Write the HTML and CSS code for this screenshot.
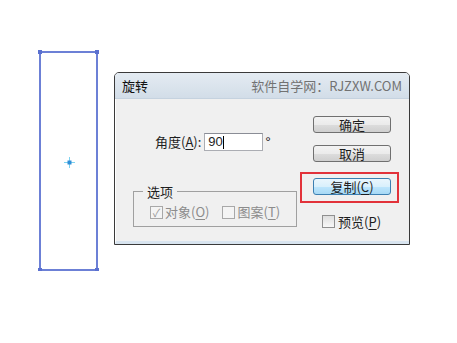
FILE: index.html
```html
<!DOCTYPE html>
<html>
  <head>
    <meta charset="UTF-8">
    <title>旋转</title>
    <link rel="stylesheet" href="styles.css">
  </head>
  <body>
    <div class="page">
      <div class="shape">
        <span class="handle tl"></span>
        <span class="handle tr"></span>
        <span class="handle bl"></span>
        <span class="handle br"></span>
        <svg class="center-point" width="13" height="13" viewBox="0 0 13 13">
          <path d="M6.5 1v11M1 6.5h11" stroke="#7fd3f0" stroke-width="1"/>
          <rect x="4.5" y="4.5" width="4" height="4" fill="#2f8fd8"/>
        </svg>
      </div>

      <div class="dialog">
        <div class="titlebar">
          <span class="title">旋转</span>
          <span class="watermark">软件自学网：RJZXW.COM</span>
        </div>
        <div class="body">
          <div class="left">
            <div class="angle-row">
              <label class="angle-label">角度(<u>A</u>):</label>
              <div class="input">90<span class="caret"></span></div>
              <span class="degree">°</span>
            </div>
            <div class="group">
              <span class="legend">选项</span>
              <div class="group-row">
                <span class="check checked">✓</span>
                <span class="muted">对象(<u>O</u>)</span>
                <span class="check second"></span>
                <span class="muted">图案(<u>T</u>)</span>
              </div>
            </div>
          </div>
          <div class="right">
            <button class="btn">确定</button>
            <button class="btn">取消</button>
            <div class="highlight">
              <button class="btn primary">复制(<u>C</u>)</button>
            </div>
            <div class="preview">
              <span class="check plain"></span>
              <span>预览(<u>P</u>)</span>
            </div>
          </div>
        </div>
      </div>
    </div>
  </body>
</html>
```

FILE: styles.css
```css
body {
  margin: 0;
  background-color: #ffffff;
  font-family: "Noto Sans CJK SC", "Liberation Sans", sans-serif;
  font-size: 13px;
  color: #1e1e1e;
}
.page {
  display: flex;
  align-items: flex-start;
  padding: 51px 0 0 39px;
}
.shape {
  position: relative;
  width: 55px;
  height: 216px;
  border: 2px solid #6c80d6;
  margin-right: 16px;
}
.handle {
  position: absolute;
  width: 4px;
  height: 4px;
  background-color: #5a70d0;
}
.handle.tl { left: -3px; top: -3px; }
.handle.tr { right: -3px; top: -3px; }
.handle.bl { left: -3px; bottom: -3px; }
.handle.br { right: -3px; bottom: -3px; }
.center-point {
  position: absolute;
  left: 22px;
  top: 103px;
}
.dialog {
  margin-top: 21px;
  width: 294px;
  height: 171px;
  border: 1px solid #3a3a3a;
  border-radius: 5px 5px 0 0;
  background-color: #f0f0f0;
  display: flex;
  flex-direction: column;
  overflow: hidden;
}
.titlebar {
  height: 25px;
  display: flex;
  align-items: center;
  justify-content: space-between;
  padding: 0 7px 0 7px;
  background: linear-gradient(#e4ebf2, #d2dde8);
  border-bottom: 1px solid #c5d2df;
}
.title {
  color: #111111;
  font-size: 13px;
}
.watermark {
  color: #727272;
  font-size: 13px;
}
.body {
  flex: 1;
  display: flex;
  border-left: 1px solid #ffffff;
  border-bottom: 3px solid #d8e4ef;
}
.left {
  width: 185px;
  display: flex;
  flex-direction: column;
}
.angle-row {
  display: flex;
  align-items: flex-start;
  margin: 34px 0 0 39px;
  height: 18px;
}
.angle-label {
  line-height: 18px;
  margin-right: 3px;
}
.input {
  width: 54px;
  height: 16px;
  border: 1px solid #abadb3;
  border-top-color: #8a8d96;
  background-color: #ffffff;
  line-height: 16px;
  padding-left: 3px;
  font-family: "Liberation Sans", sans-serif;
  display: flex;
  align-items: center;
}
.caret {
  width: 1px;
  height: 13px;
  background-color: #000000;
}
.degree {
  margin-left: 2px;
  line-height: 18px;
  font-family: "Liberation Sans", sans-serif;
  font-size: 14px;
}
.group {
  position: relative;
  margin: 40px 0 0 17px;
  width: 162px;
  height: 34px;
  border: 1px solid #a0a0a0;
}
.legend {
  position: absolute;
  left: 9px;
  top: -9px;
  padding: 0 4px;
  background-color: #f0f0f0;
  line-height: 18px;
  color: #1e1e1e;
}
.group-row {
  display: flex;
  align-items: center;
  margin: 12px 0 0 16px;
  color: #8c8c8c;
}
.check {
  width: 11px;
  height: 11px;
  border: 1px solid #a8a8a8;
  background-color: #f4f4f4;
  font-size: 11px;
  line-height: 11px;
  text-align: center;
  color: #9a9a9a;
  margin-right: 2px;
}
.check.second {
  margin-left: 13px;
}
.muted {
  line-height: 16px;
}
.right {
  display: flex;
  flex-direction: column;
  align-items: flex-start;
  padding-top: 17px;
  margin-left: 12px;
}
.btn {
  width: 78px;
  height: 17px;
  padding: 0;
  border: 1px solid #707070;
  border-radius: 3px;
  background: linear-gradient(#f3f3f3 0%, #ebebeb 50%, #dddddd 51%, #cfcfcf 100%);
  font-family: "Noto Sans CJK SC", sans-serif;
  font-size: 13px;
  line-height: 15px;
  color: #1e1e1e;
  margin-bottom: 12px;
}
.btn.primary {
  border-color: #3c7fb1;
  background: linear-gradient(#eaf6fd 0%, #d9f0fc 50%, #bee6fd 51%, #a7d9f5 100%);
  margin-bottom: 0;
}
.highlight {
  margin: -2px 0 0 -13px;
  padding: 3px 6px 5px 11px;
  border: 2px solid #e2323a;
}
.preview {
  display: flex;
  align-items: center;
  margin: 9px 0 0 9px;
}
.check.plain {
  margin-right: 3px;
  border-color: #8f8f8f;
  background: linear-gradient(#dedede, #f8f8f8);
}
u {
  text-decoration-thickness: 1px;
  text-underline-offset: 2px;
}
```
